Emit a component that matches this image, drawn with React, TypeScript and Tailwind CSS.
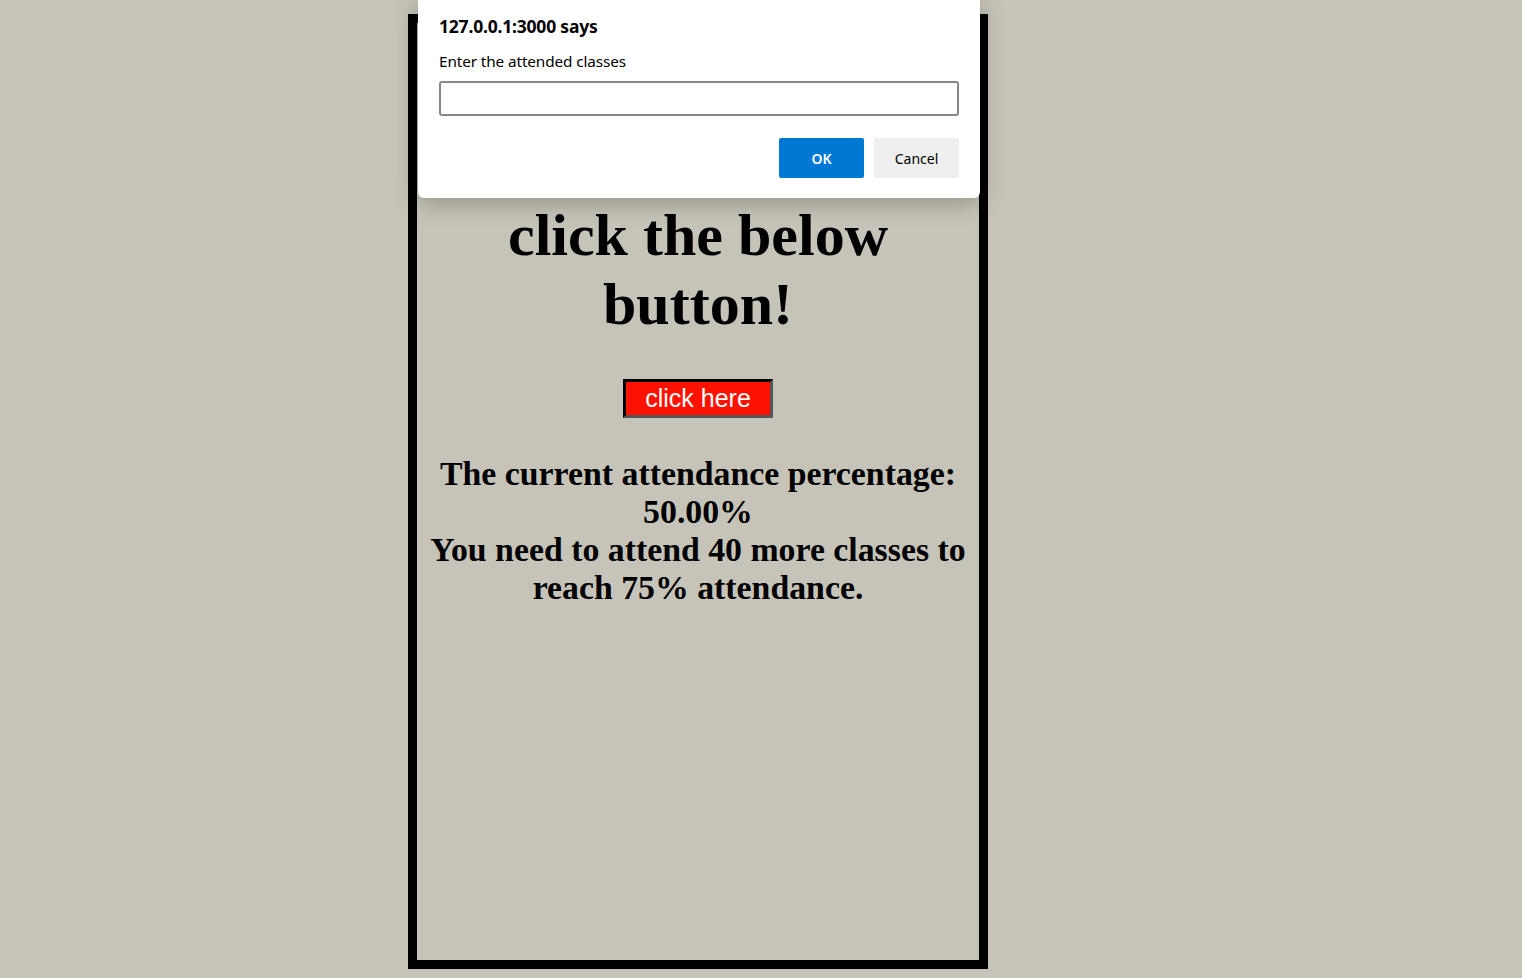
import React from "react";

const serif = { fontFamily: '"Liberation Serif", "Times New Roman", serif' };
const ui = { fontFamily: '"Noto Sans", "Open Sans", sans-serif' };

const PromptDialog: React.FC = () => {
  return (
    <div
      style={ui}
      className="absolute left-[418px] top-0 w-[562px] h-[198px] bg-white rounded-b-[6px] shadow-[0_4px_24px_rgba(0,0,0,0.28)] px-[21px] pt-[14px]"
    >
      <h6 className="text-[17.5px] font-bold text-black leading-[24px] tracking-[-0.2px]">127.0.0.1:3000 says</h6>
      <p className="text-[15.3px] text-black mt-[12px] leading-[22px] tracking-[-0.1px]">Enter the attended classes</p>
      <div className="mt-[9px] w-[520px] h-[35px] border-2 border-[#85888c] rounded-[3px] bg-white" />
      <div className="flex justify-end gap-[10px] mt-[22px]">
        <button className="w-[85px] h-[40px] bg-[#0078d4] text-white text-[14px] font-semibold rounded-[2px]">
          OK
        </button>
        <button className="w-[85px] h-[40px] bg-[#efefef] text-black text-[14px] rounded-[2px]">
          Cancel
        </button>
      </div>
    </div>
  );
};

export default function App() {
  return (
    <div className="relative min-h-[978px] w-full bg-[#c6c4b8] pt-[14px]">
      <div
        style={serif}
        className="ml-[408px] w-[580px] h-[955px] border-[9px] border-black flex flex-col items-center text-black"
      >
        <h1 className="mt-[178px] text-[60px] font-bold leading-[69px] text-center px-[40px]">
          click the below button!
        </h1>
        <button
          style={{ fontFamily: '"Liberation Sans", Arial, sans-serif' }}
          className="mt-[40px] w-[150px] h-[39px] bg-[#ff1100] text-white text-[25px] leading-none border-[3px] border-t-black border-l-black border-r-[#555] border-b-[#555]"
        >
          click here
        </button>
        <div className="mt-[37px] text-[33.8px] font-bold leading-[38px] text-center px-[6px]">
          <div>The current attendance percentage: 50.00%</div>
          <div>You need to attend 40 more classes to reach 75% attendance.</div>
        </div>
      </div>
      <PromptDialog />
    </div>
  );
}
